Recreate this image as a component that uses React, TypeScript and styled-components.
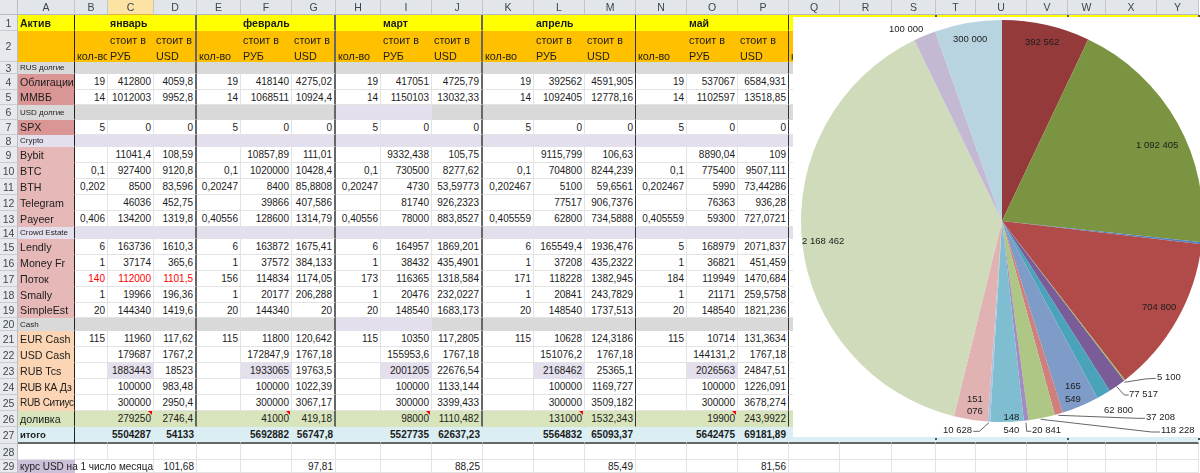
import styled, { createGlobalStyle } from "styled-components";

const GlobalStyle = createGlobalStyle`
  html, body {
    margin: 0;
    padding: 0;
    height: 100%;
    overflow: hidden;
    background: #fff;
  }
`;

const LETTERS = "ABCDEFGHIJKLMNOPQRSTUVWXY".split("");
const COL_WIDTHS = [57, 33, 46, 43, 44, 51, 44, 45, 51, 51, 51, 51, 51, 51, 51, 51, 51, 52, 44, 40, 51, 41, 38, 51, 42];
const ROW_HEIGHTS = [16, 31, 12, 16, 15, 15, 15, 12, 16, 16, 16, 16, 16, 12, 16, 16, 16, 16, 15, 13, 16, 16, 16, 16, 16, 16, 17, 16, 13];

const YELLOW = "#ffff00";
const ORANGE = "#ffc000";
const GRAY = "#d9d9d9";
const LILAC = "#e4dfec";
const GREEN = "#d8e4bc";
const BLUE = "#daeef3";

// the reference is a scaled-down photo of the sheet, everything in it is a bit soft
const Page = styled.div`
  position: relative;
  width: 1200px;
  height: 473px;
  overflow: hidden;
  filter: blur(0.3px);
`;

const Sheet = styled.div`
  display: grid;
  grid-template-columns: 18px ${COL_WIDTHS.map((w) => `${w}px`).join(" ")};
  grid-template-rows: 15px ${ROW_HEIGHTS.map((h) => `${h}px`).join(" ")};
  font-family: "Liberation Sans", Arial, sans-serif;
  color: #1c1c1c;
`;

const Corner = styled.div`
  background: #e3e6ea;
  border-right: 1px solid #b9bdc3;
  border-bottom: 1px solid #b9bdc3;
`;

const ColHead = styled.div<{ $active?: boolean }>`
  box-sizing: border-box;
  display: flex;
  align-items: center;
  justify-content: center;
  font-size: 10.5px;
  color: #3d4650;
  background: ${(p) => (p.$active ? "#fce3a4" : "#e2e5e9")};
  border-right: 1px solid #c2c6cb;
  border-bottom: 1px solid ${(p) => (p.$active ? "#eeb045" : "#b4b8be")};
`;

const RowHead = styled.div`
  box-sizing: border-box;
  display: flex;
  align-items: center;
  justify-content: center;
  font-size: 10.5px;
  color: #3d4650;
  background: #e7e9ed;
  border-right: 1px solid #b9bdc3;
  border-bottom: 1px solid #c9ccd1;
`;

const Cell = styled.div<{
  $bg?: string;
  $edge?: string;
  $base?: string;
  $right?: boolean;
  $bold?: boolean;
  $red?: boolean;
  $size?: number;
  $note?: boolean;
  $wrap?: boolean;
}>`
  box-sizing: border-box;
  position: relative;
  display: flex;
  align-items: ${(p) => (p.$wrap ? "flex-start" : "center")};
  justify-content: ${(p) => (p.$right ? "flex-end" : "flex-start")};
  padding: ${(p) => (p.$wrap ? "1px 0 0 2px" : "0 2px")};
  overflow: ${(p) => (p.$wrap ? "hidden" : "visible")};
  white-space: ${(p) => (p.$wrap ? "pre" : "nowrap")};
  line-height: ${(p) => (p.$wrap ? "16px" : "normal")};
  min-width: 0;
  background: ${(p) => p.$bg ?? "#fff"};
  border-right: ${(p) => p.$edge ?? `1px solid ${p.$bg ? "transparent" : "#e3e3e3"}`};
  border-bottom: ${(p) => p.$base ?? `1px solid ${p.$bg ? "transparent" : "#e3e3e3"}`};
  font-size: ${(p) => p.$size ?? 10}px;
  font-weight: ${(p) => (p.$bold ? 700 : 400)};
  color: ${(p) => (p.$red ? "#ff0000" : "inherit")};

  ${(p) =>
    p.$note &&
    `&::after {
      content: "";
      position: absolute;
      top: 0;
      right: 1px;
      border-top: 4px solid #ff0000;
      border-left: 4px solid transparent;
    }`}
`;

const Clip = styled.span<{ $width: number; $tight?: boolean }>`
  display: block;
  width: ${(p) => p.$width}px;
  overflow: hidden;
  flex: none;
  position: relative;
  z-index: 1;
  letter-spacing: ${(p) => (p.$tight ? "-0.3px" : "normal")};
`;

const Chart = styled.div`
  position: absolute;
  left: 793px;
  top: 17px;
  width: 407px;
  height: 420px;
  background: #fff;
  overflow: hidden;
`;

const Handle = styled.i<{ $x: number; $y: number }>`
  position: absolute;
  left: ${(p) => p.$x}px;
  top: ${(p) => p.$y}px;
  width: 2px;
  height: 2px;
  background: #555;
`;

const ChartLabel = styled.text`
  font-family: "Liberation Sans", Arial, sans-serif;
  font-size: 9.5px;
  fill: #1c1c1c;
`;

const Leader = styled.polyline`
  fill: none;
  stroke: #555;
  stroke-width: 0.9;
`;

type Month = [string, string, string];

const DATA: Record<number, { label: string; months: Month[] }> = {
  4: { label: "Облигации", months: [["19", "412800", "4059,8"], ["19", "418140", "4275,02"], ["19", "417051", "4725,79"], ["19", "392562", "4591,905"], ["19", "537067", "6584,931"]] },
  5: { label: "ММВБ", months: [["14", "1012003", "9952,8"], ["14", "1068511", "10924,4"], ["14", "1150103", "13032,33"], ["14", "1092405", "12778,16"], ["14", "1102597", "13518,85"]] },
  7: { label: "SPX", months: [["5", "0", "0"], ["5", "0", "0"], ["5", "0", "0"], ["5", "0", "0"], ["5", "0", "0"]] },
  9: { label: "Bybit", months: [["", "11041,4", "108,59"], ["", "10857,89", "111,01"], ["", "9332,438", "105,75"], ["", "9115,799", "106,63"], ["", "8890,04", "109"]] },
  10: { label: "BTC", months: [["0,1", "927400", "9120,8"], ["0,1", "1020000", "10428,4"], ["0,1", "730500", "8277,62"], ["0,1", "704800", "8244,239"], ["0,1", "775400", "9507,111"]] },
  11: { label: "BTH", months: [["0,202", "8500", "83,596"], ["0,20247", "8400", "85,8808"], ["0,20247", "4730", "53,59773"], ["0,202467", "5100", "59,6561"], ["0,202467", "5990", "73,44286"]] },
  12: { label: "Telegram", months: [["", "46036", "452,75"], ["", "39866", "407,586"], ["", "81740", "926,2323"], ["", "77517", "906,7376"], ["", "76363", "936,28"]] },
  13: { label: "Payeer", months: [["0,406", "134200", "1319,8"], ["0,40556", "128600", "1314,79"], ["0,40556", "78000", "883,8527"], ["0,405559", "62800", "734,5888"], ["0,405559", "59300", "727,0721"]] },
  15: { label: "Lendly", months: [["6", "163736", "1610,3"], ["6", "163872", "1675,41"], ["6", "164957", "1869,201"], ["6", "165549,4", "1936,476"], ["5", "168979", "2071,837"]] },
  16: { label: "Money Fr", months: [["1", "37174", "365,6"], ["1", "37572", "384,133"], ["1", "38432", "435,4901"], ["1", "37208", "435,2322"], ["1", "36821", "451,459"]] },
  17: { label: "Поток", months: [["140", "112000", "1101,5"], ["156", "114834", "1174,05"], ["173", "116365", "1318,584"], ["171", "118228", "1382,945"], ["184", "119949", "1470,684"]] },
  18: { label: "Smally", months: [["1", "19966", "196,36"], ["1", "20177", "206,288"], ["1", "20476", "232,0227"], ["1", "20841", "243,7829"], ["1", "21171", "259,5758"]] },
  19: { label: "SimpleEst", months: [["20", "144340", "1419,6"], ["20", "144340", "20"], ["20", "148540", "1683,173"], ["20", "148540", "1737,513"], ["20", "148540", "1821,236"]] },
  21: { label: "EUR Cash", months: [["115", "11960", "117,62"], ["115", "11800", "120,642"], ["115", "10350", "117,2805"], ["115", "10628", "124,3186"], ["115", "10714", "131,3634"]] },
  22: { label: "USD Cash", months: [["", "179687", "1767,2"], ["", "172847,9", "1767,18"], ["", "155953,6", "1767,18"], ["", "151076,2", "1767,18"], ["", "144131,2", "1767,18"]] },
  23: { label: "RUB Tcs", months: [["", "1883443", "18523"], ["", "1933065", "19763,5"], ["", "2001205", "22676,54"], ["", "2168462", "25365,1"], ["", "2026563", "24847,51"]] },
  24: { label: "RUB КА Дз", months: [["", "100000", "983,48"], ["", "100000", "1022,39"], ["", "100000", "1133,144"], ["", "100000", "1169,727"], ["", "100000", "1226,091"]] },
  25: { label: "RUB Ситиус", months: [["", "300000", "2950,4"], ["", "300000", "3067,17"], ["", "300000", "3399,433"], ["", "300000", "3509,182"], ["", "300000", "3678,274"]] },
  26: { label: "доливка", months: [["", "279250", "2746,4"], ["", "41000", "419,18"], ["", "98000", "1110,482"], ["", "131000", "1532,343"], ["", "19900", "243,9922"]] },
  27: { label: "итого", months: [["", "5504287", "54133"], ["", "5692882", "56747,8"], ["", "5527735", "62637,23"], ["", "5564832", "65093,37"], ["", "5642475", "69181,89"]] },
  29: { label: "курс USD на 1 число месяца", months: [["", "", "101,68"], ["", "", "97,81"], ["", "", "88,25"], ["", "", "85,49"], ["", "", "81,56"]] },
};

const SECTIONS: Record<number, string> = { 3: "RUS долгие", 6: "USD долгие", 8: "Crypto", 14: "Crowd Estate", 20: "Cash" };
const MONTHS = ["январь", "февраль", "март", "апрель", "май"];

const labelFill = (row: number) => {
  if (row === 1) return YELLOW;
  if (row === 2) return ORANGE;
  if (row === 3 || row === 6 || row === 20) return GRAY;
  if (row === 8 || row === 14) return LILAC;
  if (row <= 7) return "#da9694";
  if (row <= 19) return "#e6b8b7";
  if (row <= 25) return "#fcd5b4";
  if (row === 26) return GREEN;
  if (row === 27) return BLUE;
  if (row === 29) return "#ccc0da";
  return undefined;
};

// col is an index into LETTERS, 0 is A
const cellFill = (row: number, col: number) => {
  if (row === 1) return YELLOW;
  if (row === 2) return ORANGE;
  if (row === 3) return GRAY;
  if (row === 6 || row === 20) return col === 7 || col === 8 ? LILAC : GRAY;
  if (row === 8 || row === 14) return LILAC;
  if (row === 23 && col <= 15 && col % 3 === 2) return LILAC;
  if (row === 26) return GREEN;
  if (row === 27) return BLUE;
  if (row === 29 && col === 1) return "#fff";
  return undefined;
};

const cellEdge = (row: number, col: number) => {
  if (col === 0 && row <= 27) return "1px solid #222";
  if (row > 26) return undefined;
  if (col === 3 || col === 6 || col === 9) return "2px solid #666";
  if (col === 12 || col === 15) return "1px solid #333";
  return undefined;
};

const cellText = (row: number, col: number) => {
  if (col === 16) return row === 2 ? "\nкол-во" : "";
  if (col > 15 || col < 1) return "";
  const month = Math.floor((col - 1) / 3);
  const part = (col - 1) % 3;
  if (row === 1) return part === 1 ? MONTHS[month] : "";
  if (row === 2) return ["\nкол-во", "стоит в\nРУБ", "стоит в\nUSD"][part];
  return DATA[row]?.months[month][part] ?? "";
};

const labelSize = (row: number, isSection: boolean) => {
  if (isSection) return 8;
  if (row === 1) return 10.5;
  if (row === 27) return 9.5;
  if (row === 29 || row === 25) return 10;
  return 10.7;
};

const SLICES: [number, string][] = [
  [392562, "#953a3a"],
  [1092405, "#7a9441"],
  [9116, "#4f81bd"],
  [704800, "#b04b49"],
  [5100, "#9bbb59"],
  [77517, "#7a5c98"],
  [62800, "#48a3bb"],
  [165549, "#7f9bc8"],
  [37208, "#cf7f7d"],
  [118228, "#afc784"],
  [20841, "#a28cc2"],
  [148540, "#7fbdd0"],
  [10628, "#a9c2df"],
  [151076, "#e0b3b2"],
  [2168462, "#cfdbba"],
  [100000, "#c3b9d3"],
  [300000, "#b7d4e0"],
];

const CX = 1002;
const CY = 221;
const R = 201;

const polar = (angle: number) => {
  const x = CX + R * Math.sin(angle);
  const y = CY - R * Math.cos(angle);
  return `${x.toFixed(2)} ${y.toFixed(2)}`;
};

const Pie = () => {
  const total = SLICES.reduce((sum, [v]) => sum + v, 0);
  let start = 0;
  return (
    <>
      {SLICES.map(([value, color]) => {
        const end = start + (value / total) * Math.PI * 2;
        const d = `M${CX} ${CY} L${polar(start)} A${R} ${R} 0 0 1 ${polar(end)} Z`;
        start = end;
        return <path key={color} d={d} fill={color} />;
      })}
    </>
  );
};

const LABELS: [string, number, number][] = [
  ["100 000", 889, 28],
  ["300 000", 953, 38],
  ["392 562", 1025, 41.5],
  ["1 092 405", 1136, 144],
  ["2 168 462", 802, 240],
  ["704 800", 1142, 306],
  ["5 100", 1157, 376],
  ["77 517", 1129, 393],
  ["165", 1065, 385],
  ["549", 1065, 398],
  ["62 800", 1104, 409],
  ["37 208", 1146, 416],
  ["151", 967, 398],
  ["076", 967, 410.5],
  ["148", 1003.5, 416],
  ["540", 1003.5, 429],
  ["10 628", 943, 429],
  ["20 841", 1032, 429],
  ["118 228", 1161, 429],
];

const LEADERS = [
  "1124.3,382.3 1145,379 1155.7,378.3",
  "1116.7,386.7 1124.3,395 1128.7,395",
  "1058.3,415.3 1136.7,418.3 1145,418.3",
  "1040.7,419.3 1151.7,432 1160,432",
  "989,422.7 979.3,431.3 973.3,431.3",
  "1026,422.7 1026.7,431.3 1031.3,431.3",
];

const HANDLES = [
  [935, 15],
  [1067, 15],
  [1198, 15],
  [935, 438],
  [1067, 438],
  [1198, 438],
];

const App = () => (
  <Page>
    <GlobalStyle />
    <Sheet>
      <Corner />
      {LETTERS.map((letter) => (
        <ColHead key={letter} $active={letter === "C"}>
          {letter}
        </ColHead>
      ))}
      {ROW_HEIGHTS.map((_, i) => {
        const row = i + 1;
        const section = SECTIONS[row];
        const label = row === 1 ? "Актив" : section ?? DATA[row]?.label ?? "";
        return [
          <RowHead key={`h${row}`}>{row}</RowHead>,
          <Cell
            key={`a${row}`}
            $bg={labelFill(row)}
            $edge={cellEdge(row, 0)}
            $base={row === 27 ? "2px solid #666" : undefined}
            $bold={row === 1 || row === 27}
            $size={labelSize(row, !!section)}
          >
            <Clip $width={row === 29 ? 134 : 55} $tight={row === 24 || row === 25}>
              {label}
            </Clip>
          </Cell>,
          ...LETTERS.slice(1).map((letter, j) => {
            const col = j + 1;
            const text = cellText(row, col);
            return (
              <Cell
                key={`${letter}${row}`}
                $bg={cellFill(row, col)}
                $edge={cellEdge(row, col)}
                $base={row === 27 ? "2px solid #666" : undefined}
                $right={row > 2}
                $wrap={row === 2}
                $bold={row === 1 || row === 27}
                $red={row === 17 && col <= 3}
                $note={row === 26 && col <= 15 && col % 3 === 2}
                $size={row === 1 ? 10.5 : row === 2 ? 10.8 : 10}
              >
                {text}
              </Cell>
            );
          }),
        ];
      })}
    </Sheet>
    {HANDLES.map(([x, y]) => (
      <Handle key={`${x}-${y}`} $x={x} $y={y} />
    ))}
    <Chart>
      <svg width="407" height="420" viewBox="793 17 407 420">
        <Pie />
        {LEADERS.map((points) => (
          <Leader key={points} points={points} />
        ))}
        {LABELS.map(([text, x, y]) => (
          <ChartLabel key={`${text}${x}`} x={x} y={y} dominantBaseline="central">
            {text}
          </ChartLabel>
        ))}
      </svg>
    </Chart>
  </Page>
);

export default App;
